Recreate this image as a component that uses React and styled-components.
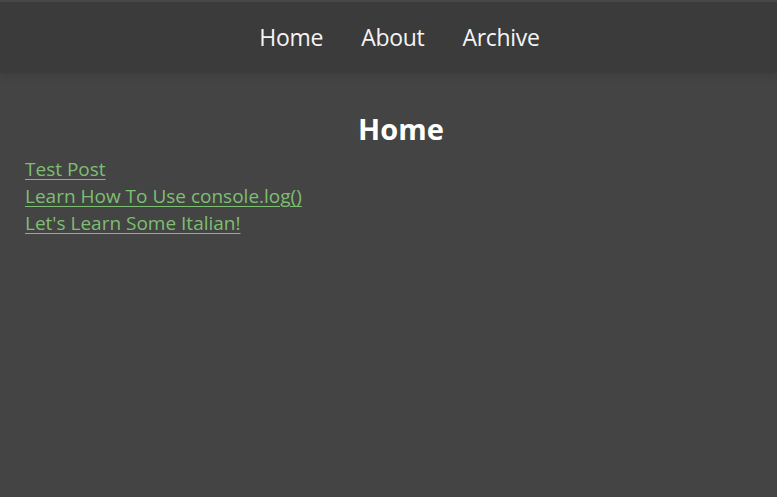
import React from "react";
import styled, { createGlobalStyle } from "styled-components";

const GlobalStyle = createGlobalStyle`
  html, body {
    margin: 0;
    padding: 0;
    background-color: #444444;
    font-family: "Open Sans", "Noto Sans", sans-serif;
  }
`;

const posts = [
  { title: "Test Post", slug: "test-post" },
  { title: "Learn How To Use console.log()", slug: "console-log" },
  { title: "Let's Learn Some Italian!", slug: "italian" },
];

const App = () => {
  return (
    <>
      <GlobalStyle />
      <Header>
        <Nav>
          <NavLink href="#">Home</NavLink>
          <NavLink href="#">About</NavLink>
          <NavLink href="#">Archive</NavLink>
        </Nav>
      </Header>
      <Main>
        <Title>Home</Title>
        <PostList>
          {posts.map((post) => (
            <li key={post.slug}>
              <PostLink href="#">{post.title}</PostLink>
            </li>
          ))}
        </PostList>
      </Main>
    </>
  );
};

const Header = styled.header`
  height: 73px;
  background-color: #3b3b3b;
  border-top: 2px solid #474747;
  box-sizing: border-box;
  box-shadow: 0 2px 8px rgba(0, 0, 0, 0.12);
  display: flex;
  align-items: center;
  justify-content: center;
  padding-left: 22px;
  padding-bottom: 2px;
`;

const Nav = styled.nav`
  display: flex;
  gap: 38px;
`;

const NavLink = styled.a`
  color: #f4f4f4;
  font-size: 23px;
  text-decoration: none;
  letter-spacing: -0.3px;
`;

const Main = styled.main`
  padding: 39px 0 0 25px;
`;

const Title = styled.h1`
  margin: 0;
  text-align: center;
  color: #ffffff;
  font-size: 29px;
  font-weight: 700;
  line-height: 1.15;
`;

const PostList = styled.ul`
  list-style: none;
  margin: 11px 0 0;
  padding: 0;
  font-size: 19px;
  li {
    height: 27px;
    line-height: 27px;
  }
`;

const PostLink = styled.a`
  color: #7dbf72;
  font-size: 19px;
  text-decoration: underline;
  text-underline-offset: 3px;
`;

export default App;
